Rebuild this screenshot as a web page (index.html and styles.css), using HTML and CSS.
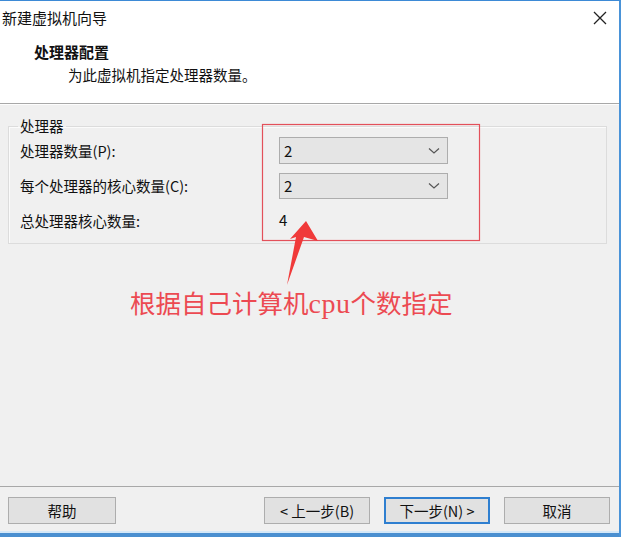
FILE: index.html
```html
<!DOCTYPE html>
<html lang="zh-CN">
<head>
<meta charset="utf-8">
<title>新建虚拟机向导</title>
<link rel="stylesheet" href="styles.css">
</head>
<body>
<div class="window">
  <div class="titlebar">
    <span class="title">新建虚拟机向导</span>
    <svg class="close" width="14" height="14" viewBox="0 0 14 14"><path d="M1 1 L13 13 M13 1 L1 13" stroke="#222" stroke-width="1.3" fill="none"/></svg>
  </div>
  <div class="header">
    <div class="heading">处理器配置</div>
    <div class="subtitle">为此虚拟机指定处理器数量。</div>
  </div>
  <div class="content">
    <fieldset class="group">
      <legend class="legend">处理器</legend>
      <div class="row">
        <span class="label">处理器数量(P):</span>
        <div class="combo"><span class="val">2</span><svg class="chev" width="12" height="8" viewBox="0 0 12 8"><path d="M1 1.5 L6 6 L11 1.5" stroke="#555" stroke-width="1.2" fill="none"/></svg></div>
      </div>
      <div class="row">
        <span class="label">每个处理器的核心数量(C):</span>
        <div class="combo"><span class="val">2</span><svg class="chev" width="12" height="8" viewBox="0 0 12 8"><path d="M1 1.5 L6 6 L11 1.5" stroke="#555" stroke-width="1.2" fill="none"/></svg></div>
      </div>
      <div class="row">
        <span class="label">总处理器核心数量:</span>
        <span class="total">4</span>
      </div>
    </fieldset>
  </div>
  <div class="footer">
    <div class="btn help">帮助</div>
    <div class="spacer"></div>
    <div class="btn">&lt; 上一步(B)</div>
    <div class="btn primary">下一步(N) &gt;</div>
    <div class="btn cancel">取消</div>
  </div>
  <div class="bottomedge"></div>

  <svg class="overlay" width="621" height="537" viewBox="0 0 621 537">
    <rect x="262.5" y="124.5" width="217" height="116" fill="none" stroke="#e3505a" stroke-width="1.2"/>
    <polygon points="306,221 318,241 304,237 287,285 296,237 290,239" fill="#f03a3a"/>
  </svg>
  <div class="note">根据自己计算机<span class="latin">cpu</span>个数指定</div>
</div>
</body>
</html>
```
FILE: styles.css
```css
html, body {
  margin: 0;
  padding: 0;
}
body {
  width: 621px;
  height: 537px;
  overflow: hidden;
  font-family: "Noto Sans CJK SC", "Liberation Sans", sans-serif;
  font-size: 14.5px;
  color: #111;
}
.window {
  position: relative;
  width: 621px;
  height: 537px;
  box-sizing: border-box;
  border-top: 1px solid #3d8ad6;
  border-right: 2px solid #4a93d8;
  background: #f0f0f0;
  display: flex;
  flex-direction: column;
}
.titlebar {
  height: 33px;
  background: #fff;
  display: flex;
  align-items: center;
  justify-content: space-between;
  padding: 0 12px 0 2px;
  font-size: 15px;
}
.title {
  color: #111;
}
.header {
  height: 69px;
  background: #fff;
  border-bottom: 1px solid #a8a8a8;
  box-shadow: 0 1px 0 #fdfdfd;
  display: flex;
  flex-direction: column;
}
.heading {
  font-weight: bold;
  font-size: 15px;
  padding-left: 34px;
  margin-top: 7px;
  line-height: 22px;
}
.subtitle {
  padding-left: 68px;
  line-height: 22px;
  margin-top: 1px;
}
.content {
  padding: 12px 12px 0 8px;
  flex: 1;
}
.group {
  margin: 0;
  padding: 0 0 9px 11px;
  border: 1px solid #dcdcdc;
  box-shadow: inset 1px 1px 0 #fbfbfb;
  min-width: 0;
}
.legend {
  padding: 0 2px;
  margin-left: -2px;
  line-height: 20px;
}
.row {
  display: flex;
  align-items: center;
  height: 27px;
  margin-top: 8px;
}
.row:first-of-type {
  margin-top: 1px;
}
.label {
  width: 259px;
  flex: none;
}
.combo {
  width: 156px;
  height: 25px;
  border: 1px solid #adadad;
  background: #e5e5e5;
  display: flex;
  align-items: center;
  justify-content: space-between;
  padding: 0 7px 0 4px;
  box-sizing: content-box;
  font-size: 15px;
}
.row:nth-of-type(2) .combo {
  height: 24px;
}
.chev {
  display: block;
}
.total {
  font-size: 15px;
  margin-top: -2px;
}
.footer {
  height: 45px;
  border-top: 1px solid #a8a8a8;
  display: flex;
  align-items: flex-start;
  padding: 10px 9px 0 8px;
  box-sizing: border-box;
}
.btn {
  width: 104px;
  height: 25px;
  border: 1px solid #adadad;
  background: #e1e1e1;
  display: flex;
  align-items: center;
  justify-content: center;
  font-size: 14.5px;
  margin-left: 14px;
}
.btn.help {
  margin-left: 0;
  width: 106px;
}
.btn.primary {
  border: 2px solid #2f7fd0;
  height: 23px;
  width: 102px;
}
.spacer {
  flex: 1;
}
.bottomedge {
  height: 4px;
  border-top: 2px solid #d4e8f8;
  background: #4a8fd0;
}
.overlay {
  position: absolute;
  left: 0;
  top: -1px;
  pointer-events: none;
}
.note {
  position: absolute;
  left: 130px;
  top: 284px;
  font-size: 25.5px;
  line-height: 34px;
  color: #ec4a52;
  white-space: nowrap;
}
.note .latin {
  font-family: "Liberation Serif", serif;
  font-size: 28px;
  letter-spacing: 0.5px;
}
```
